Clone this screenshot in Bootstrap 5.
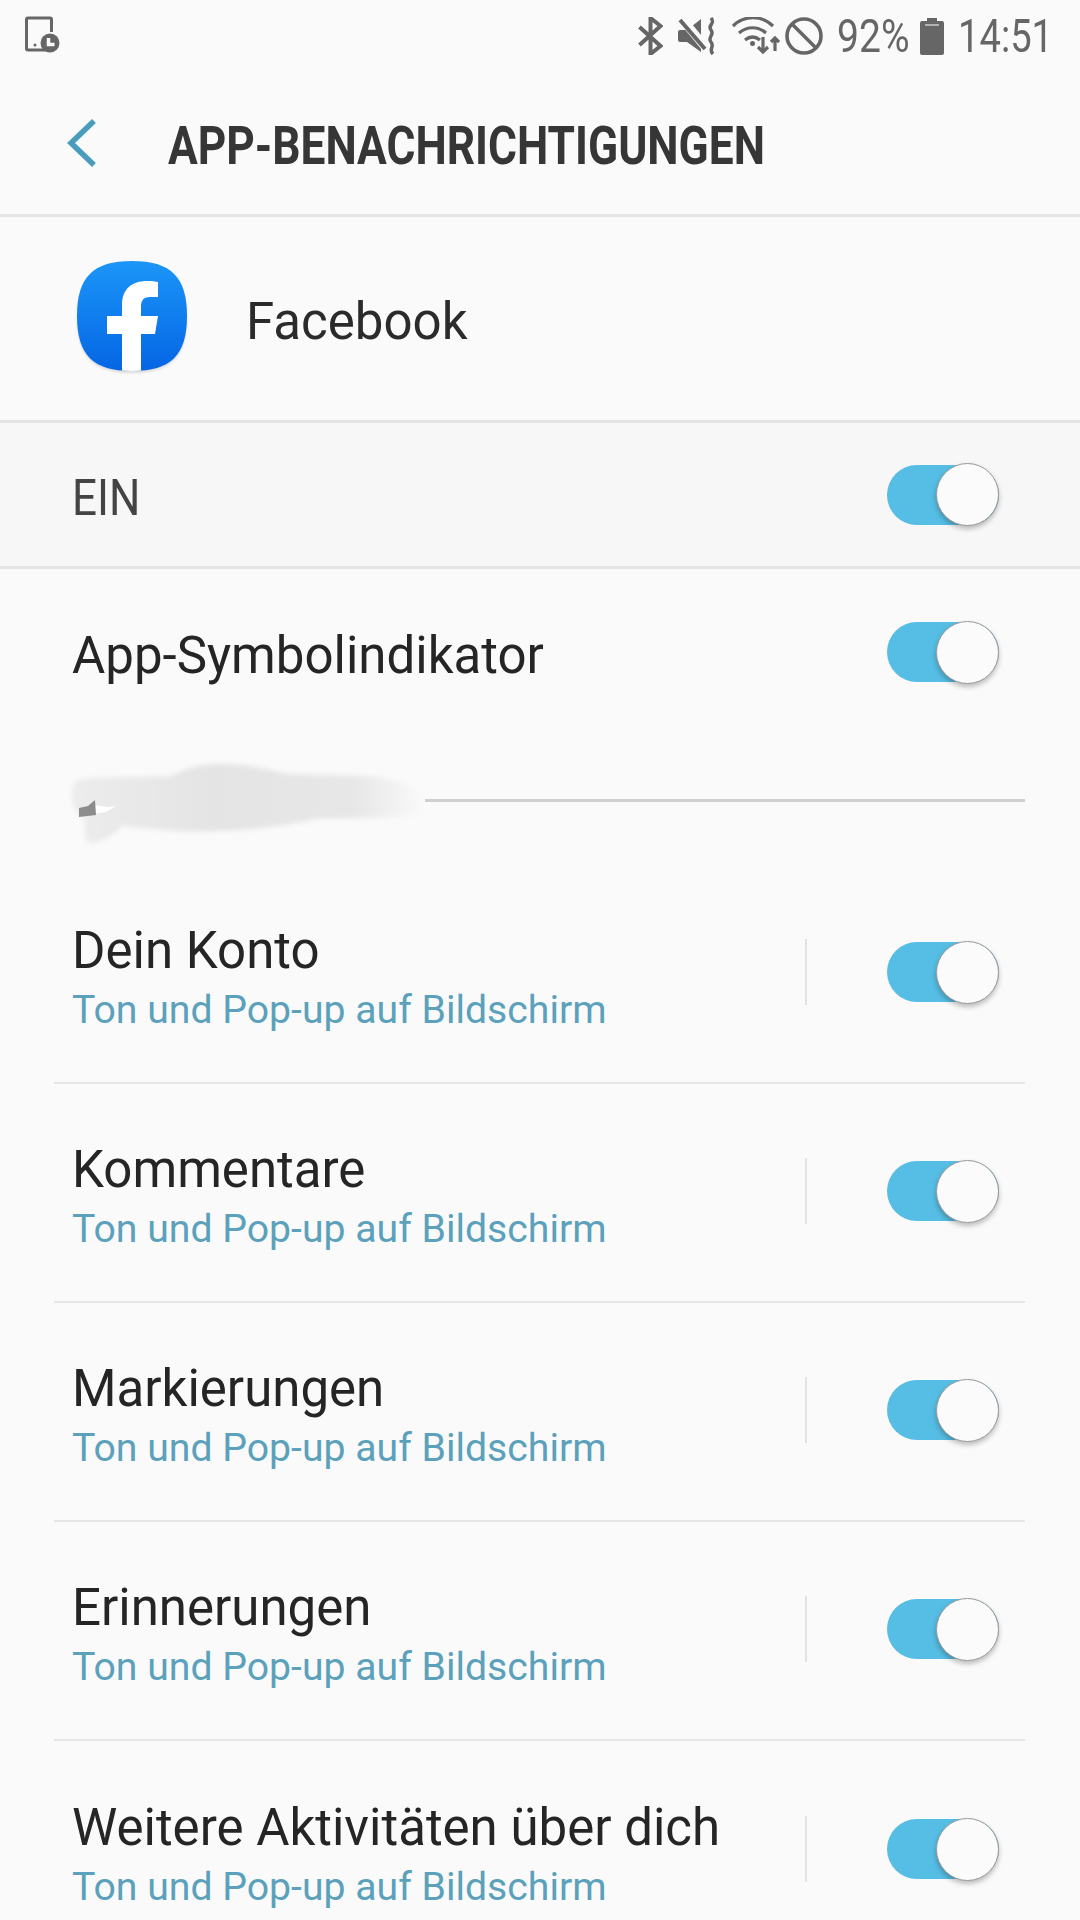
<!DOCTYPE html>
<html lang="de">
<head>
<meta charset="utf-8">
<title>App-Benachrichtigungen</title>
<link href="https://cdn.jsdelivr.net/npm/bootstrap@5.3.0/dist/css/bootstrap.min.css" rel="stylesheet">
<style>
html,body{width:1080px;height:1920px;overflow:hidden;background:#fafafa;font-family:Roboto,"Liberation Sans",sans-serif;color:#252525}
.screen{width:1080px;height:1920px;overflow:hidden}
.screen>*{flex:none}
.statusbar{height:72px;padding:0 30px 0 24px;color:#666}
.statustext{font-size:46px;line-height:1;display:inline-block;transform-origin:left center;white-space:nowrap}
.st-pct{width:70px;margin-left:14px;transform:scaleX(.85)}
.st-time{width:92px;margin-left:14px;transform:scaleX(.83)}
.st-batt{margin-left:13px}
.st-bt{margin-right:15px}
.st-spk{margin-right:15px}
.st-wifi{margin-right:5px}
.titlebar{height:145px;border-bottom:3px solid #e4e4e4;padding-left:66px}
.pagetitle{font-size:54px;font-weight:700;color:#363636;line-height:1;margin:6px 0 0 70px;transform:scaleX(.82);transform-origin:left center;white-space:nowrap}
.approw{height:206px;border-bottom:3px solid #e4e4e4;padding:0 0 6px 76px}
.appicon{filter:drop-shadow(0 2px 1px rgba(0,0,0,.12));flex:none}
.appname{font-size:51px;margin:13px 0 0 58px;color:#2b2b2b}
.einrow{height:146px;background:#f7f7f7;border-bottom:3px solid #e4e4e4;padding:0 81px 0 72px}
.eintext{font-size:50px;color:#444;transform:scaleX(.88);transform-origin:left center;margin-top:7px}
.symrow{height:172px;padding:0 81px 0 72px}
.rowname{font-size:51px;line-height:1;color:#252525}
.symtoggle{margin-bottom:6px}
.subhead{height:124px;padding:0 55px 5px 72px}
.smudge{width:353px;height:84px;flex:none;overflow:visible}
.subline{height:3px;background:#cfcfcf;flex:1}
.item{height:219px;margin:0 55px 0 54px;padding:0 26px 0 18px;border-bottom:2px solid #e6e6e6}
.itemtext{margin-top:8px}
.itemctl{margin-bottom:3px}
.itemsub{font-size:39.200px;line-height:1;color:#5ba1bb;margin-top:15px}
.vsep{width:2px;height:66px;background:#e2e2e2;margin-right:80px}
.trk{width:112px;height:60px;border-radius:30px;background:#56bde4;flex:none}
.knb{width:63px;height:63px;border-radius:50%;background:#fbfbfb;border:1px solid #9a9a9a;box-shadow:0 3px 5px rgba(0,0,0,.25);flex:none;margin-right:0}
</style>
</head>
<body>
<div class="screen d-flex flex-column">
  <div class="statusbar d-flex align-items-center justify-content-between">
    <svg width="40" height="40" viewBox="0 0 40 40" fill="none"><path d="M22 34H4a1.500 1.500 0 0 1-1.500-1.500V3.500A1.500 1.500 0 0 1 4 2h22a1.500 1.500 0 0 1 1.500 1.500V16" stroke="#666" stroke-width="3"/><circle cx="11" cy="29" r="1.500" fill="#666"/><circle cx="26" cy="27" r="9.500" fill="#666"/><path d="M24.500 22v6.500h6" stroke="#fafafa" stroke-width="3.500" fill="none"/></svg>
    <div class="d-flex align-items-center">
      <svg class="st-bt" width="25" height="38" viewBox="0 0 25 38" fill="none" stroke="#666" stroke-width="4"><path d="M1.500 10l21 19-10 8V1l10 8-21 19"/></svg>
      <svg class="st-spk" width="39" height="38" viewBox="0 0 39 38"><path d="M2 13h7L23 2v33L9 25H2a2 2 0 0 1-2-2v-8a2 2 0 0 1 2-2z" fill="#666"/><path d="M4 2l24 29" stroke="#fafafa" stroke-width="9"/><path d="M2 3l25 29" stroke="#666" stroke-width="4"/><path d="M33 1c5 6-4 7 0 12s-4 7 0 12-3 7 2 12" stroke="#666" stroke-width="3.500" fill="none"/></svg>
      <svg class="st-wifi" width="48" height="38" viewBox="0 0 48 38" fill="none" stroke="#666" stroke-width="3.200"><path d="M1 9c11-11 29-11 40 0M7 16c8-7 19-7 27 0M13 23c5-4 10-4 15 0"/><circle cx="20.500" cy="26.500" r="2.500" fill="#666" stroke="none"/><path d="M31 20v15m-5-5l5 5 5-5M43 34V21m-4 4l4-4 4 4"/></svg>
      <svg width="38" height="38" viewBox="0 0 38 38" fill="none" stroke="#666" stroke-width="3.600"><circle cx="19" cy="19" r="17"/><path d="M7 7l24 24"/></svg>
      <span class="statustext st-pct">92%</span>
      <svg class="st-batt" width="24" height="38" viewBox="0 0 24 38"><path d="M7 1h10v3h5a2 2 0 0 1 2 2v30a2 2 0 0 1-2 2H2a2 2 0 0 1-2-2V6a2 2 0 0 1 2-2h5z" fill="#666"/><path d="M5 8h14" stroke="#ccc" stroke-width="1.500"/></svg>
      <span class="statustext st-time">14:51</span>
    </div>
  </div>

  <div class="titlebar d-flex align-items-center">
    <svg width="32" height="50" viewBox="0 0 32 50" fill="none" stroke="#4a9cbc" stroke-width="5.500"><path d="M28 3L5 25l23 22"/></svg>
    <h1 class="pagetitle">APP-BENACHRICHTIGUNGEN</h1>
  </div>

  <div class="approw d-flex align-items-center">
    <svg class="appicon" width="112" height="112" viewBox="0 0 112 112"><defs><linearGradient id="fb" x1="0" y1="0" x2="0" y2="1"><stop offset="0" stop-color="#1b96f8"/><stop offset="1" stop-color="#0565e4"/></linearGradient><clipPath id="sq"><path d="M56 1C95 1 111 17 111 56s-16 55-55 55S1 95 1 56 17 1 56 1z"/></clipPath></defs><path d="M56 1C95 1 111 17 111 56s-16 55-55 55S1 95 1 56 17 1 56 1z" fill="url(#fb)"/><path clip-path="url(#sq)" d="M46 112V74H31V56h15V45c0-16 10-24 25-24 5 0 9 .5 11 1v15h-8c-7 0-9 4-9 10v9h17l-3 18H65v38z" fill="#fff"/></svg>
    <span class="appname">Facebook</span>
  </div>

  <div class="einrow d-flex align-items-center justify-content-between">
    <span class="eintext">EIN</span>
    <div class="trk d-flex align-items-center justify-content-end"><div class="knb"></div></div>
  </div>

  <div class="symrow d-flex align-items-center justify-content-between">
    <span class="rowname">App-Symbolindikator</span>
    <div class="trk symtoggle d-flex align-items-center justify-content-end"><div class="knb"></div></div>
  </div>

  <div class="subhead d-flex align-items-center">
    <svg class="smudge" viewBox="0 -2 353 84"><defs><filter id="bl" x="-10%" y="-30%" width="120%" height="160%"><feGaussianBlur stdDeviation="2.500"/></filter><linearGradient id="fd" x1="0" x2="1" y1="0" y2="0"><stop offset="0" stop-color="#ececec"/><stop offset=".4" stop-color="#e4e4e4"/><stop offset=".8" stop-color="#e7e7e7"/><stop offset="1" stop-color="#fafafa"/></linearGradient></defs><path d="M0 30C0 20 8 18 20 17L100 15C115 6 130 3 150 3C175 3 195 8 215 13L295 15C320 16 335 24 353 34V54L311 57 245 58C210 66 170 70 138 70 110 72 80 68 50 65 42 74 28 82 20 82 12 82 12 70 13 58 4 54 0 44 0 30z" fill="url(#fd)" filter="url(#bl)"/><path d="M22 44l14 2 8-1-10 6-12 2z" fill="#fff"/><path d="M7 47l9-2 7-6 1 15-17 2z" fill="#8c8c8c"/></svg>
    <div class="subline"></div>
  </div>

  <div class="item d-flex align-items-center justify-content-between">
    <div class="itemtext"><div class="rowname">Dein Konto</div><div class="itemsub">Ton und Pop-up auf Bildschirm</div></div>
    <div class="itemctl d-flex align-items-center"><div class="vsep"></div><div class="trk d-flex align-items-center justify-content-end"><div class="knb"></div></div></div>
  </div>
  <div class="item d-flex align-items-center justify-content-between">
    <div class="itemtext"><div class="rowname">Kommentare</div><div class="itemsub">Ton und Pop-up auf Bildschirm</div></div>
    <div class="itemctl d-flex align-items-center"><div class="vsep"></div><div class="trk d-flex align-items-center justify-content-end"><div class="knb"></div></div></div>
  </div>
  <div class="item d-flex align-items-center justify-content-between">
    <div class="itemtext"><div class="rowname">Markierungen</div><div class="itemsub">Ton und Pop-up auf Bildschirm</div></div>
    <div class="itemctl d-flex align-items-center"><div class="vsep"></div><div class="trk d-flex align-items-center justify-content-end"><div class="knb"></div></div></div>
  </div>
  <div class="item d-flex align-items-center justify-content-between">
    <div class="itemtext"><div class="rowname">Erinnerungen</div><div class="itemsub">Ton und Pop-up auf Bildschirm</div></div>
    <div class="itemctl d-flex align-items-center"><div class="vsep"></div><div class="trk d-flex align-items-center justify-content-end"><div class="knb"></div></div></div>
  </div>
  <div class="item d-flex align-items-center justify-content-between border-0">
    <div class="itemtext"><div class="rowname">Weitere Aktivitäten über dich</div><div class="itemsub">Ton und Pop-up auf Bildschirm</div></div>
    <div class="itemctl d-flex align-items-center"><div class="vsep"></div><div class="trk d-flex align-items-center justify-content-end"><div class="knb"></div></div></div>
  </div>
</div>
<script src="https://cdn.jsdelivr.net/npm/bootstrap@5.3.0/dist/js/bootstrap.bundle.min.js"></script>
</body>
</html>
